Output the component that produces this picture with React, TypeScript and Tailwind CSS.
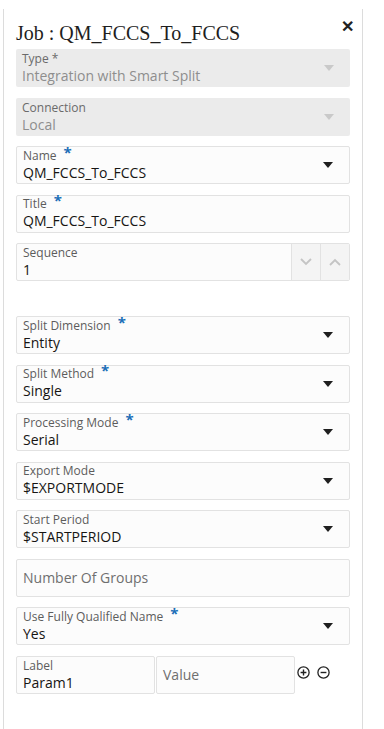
import React from 'react';

const font = { fontFamily: '"Open Sans", "Noto Sans", sans-serif' };

const Caret: React.FC<{ muted?: boolean }> = ({ muted }) => (
  <svg width="10" height="6" viewBox="0 0 10 6" className="shrink-0">
    <path d="M0 0 L10 0 L5 6 Z" fill={muted ? '#c9c9c9' : '#1f1f1f'} />
  </svg>
);

const Star = () => <span className="ml-[7px] text-[#1c6fb8] text-[15px] leading-none font-bold relative top-[-3px]">*</span>;

interface FieldProps {
  label: string;
  value: string;
  required?: boolean;
  select?: boolean;
}

const Field: React.FC<FieldProps> = ({ label, value, required, select = true }) => (
  <div className="h-[38px] flex items-center bg-[#fcfcfc] border border-[#e2e2e2] rounded-[2px] pl-[6px] pr-[16px]">
    <div className="flex-1 min-w-0 flex flex-col">
      <div className="flex items-center text-[12px] leading-[15px] text-[#5c5c5c] mt-[-1px]">
        {label}
        {required && <Star />}
      </div>
      <div className="text-[14px] leading-[19px] text-[#161513]">{value}</div>
    </div>
    {select && <Caret />}
  </div>
);

const Disabled: React.FC<{ label: string; value: string }> = ({ label, value }) => (
  <div className="h-[38px] flex items-center bg-[#ebebeb] rounded-[2px] pl-[6px] pr-[16px]">
    <div className="flex-1 flex flex-col">
      <div className="text-[12px] leading-[15px] text-[#6a6a6a]">{label}</div>
      <div className="text-[14px] leading-[19px] text-[#8e8e8e]">{value}</div>
    </div>
    <Caret muted />
  </div>
);

const Chevron: React.FC<{ up?: boolean }> = ({ up }) => (
  <svg width="12" height="8" viewBox="0 0 12 8">
    <path d={up ? 'M1 7 L6 2 L11 7' : 'M1 1 L6 6 L11 1'} fill="none" stroke="#c4c4c4" strokeWidth="1.8" />
  </svg>
);

export default function App() {
  return (
    <div className="w-[384px] h-[729px] bg-white overflow-hidden" style={font}>
      <div className="ml-[3px] w-[360px] h-full border-l border-r border-[#dcdcdc] pl-[12px] pr-[12px] mt-[9px]">
        {/* Header */}
        <div className="flex items-start justify-between h-[40px]">
          <h1 className="text-[20px] leading-[24px] mt-[12px] text-[#1e1e1e]" style={{ fontFamily: '"Liberation Serif", serif' }}>
            Job : QM_FCCS_To_FCCS
          </h1>
          <span className="text-[16px] font-bold text-[#222] leading-none mt-[9px] mr-[-4px]">✕</span>
        </div>

        <div className="flex flex-col gap-[10.5px]">
          <Disabled label="Type *" value="Integration with Smart Split" />
          <Disabled label="Connection" value="Local" />
          <Field label="Name" value="QM_FCCS_To_FCCS" required />
          <Field label="Title" value="QM_FCCS_To_FCCS" required select={false} />

          {/* Sequence */}
          <div className="h-[38px] flex bg-[#fcfcfc] border border-[#e2e2e2] rounded-[2px]">
            <div className="flex-1 flex flex-col pl-[6px] justify-center">
              <div className="text-[12px] leading-[15px] text-[#5c5c5c]">Sequence</div>
              <div className="text-[14px] leading-[19px] text-[#161513]">1</div>
            </div>
            <div className="w-[29px] flex items-center justify-center bg-[#f4f4f4] border-l border-[#e2e2e2]">
              <Chevron />
            </div>
            <div className="w-[29px] flex items-center justify-center bg-[#f4f4f4] border-l border-[#e2e2e2]">
              <Chevron up />
            </div>
          </div>

          <div className="h-[14px]" />

          <Field label="Split Dimension" value="Entity" required />
          <Field label="Split Method" value="Single" required />
          <Field label="Processing Mode" value="Serial" required />
          <Field label="Export Mode" value="$EXPORTMODE" />
          <Field label="Start Period" value="$STARTPERIOD" />
          <div className="h-[38px] flex items-center bg-[#fcfcfc] border border-[#e2e2e2] rounded-[2px] pl-[6px]">
            <span className="text-[14px] text-[#6f6f6f]">Number Of Groups</span>
          </div>
          <Field label="Use Fully Qualified Name" value="Yes" required />

          {/* Params */}
          <div className="flex items-center">
            <div className="w-[139px] h-[38px] flex flex-col justify-center bg-[#fcfcfc] border border-[#e2e2e2] rounded-[2px] pl-[6px]">
              <div className="text-[12px] leading-[15px] text-[#5c5c5c]">Label</div>
              <div className="text-[14px] leading-[19px] text-[#161513]">Param1</div>
            </div>
            <div className="w-[139px] h-[38px] flex items-center bg-[#fcfcfc] border border-[#e2e2e2] rounded-[2px] pl-[6px] ml-[1px]">
              <span className="text-[14px] text-[#6f6f6f]">Value</span>
            </div>
            <div className="flex items-center gap-[7px] ml-[2px] self-start mt-[10px]">
              <svg width="13" height="13" viewBox="0 0 13 13">
                <circle cx="6.5" cy="6.5" r="5.6" fill="none" stroke="#222" strokeWidth="1.3" />
                <path d="M6.5 3.6 V9.4 M3.6 6.5 H9.4" stroke="#222" strokeWidth="1.4" />
              </svg>
              <svg width="13" height="13" viewBox="0 0 13 13">
                <circle cx="6.5" cy="6.5" r="5.6" fill="none" stroke="#222" strokeWidth="1.3" />
                <path d="M3.6 6.5 H9.4" stroke="#222" strokeWidth="1.4" />
              </svg>
            </div>
          </div>
        </div>
      </div>
    </div>
  );
}
